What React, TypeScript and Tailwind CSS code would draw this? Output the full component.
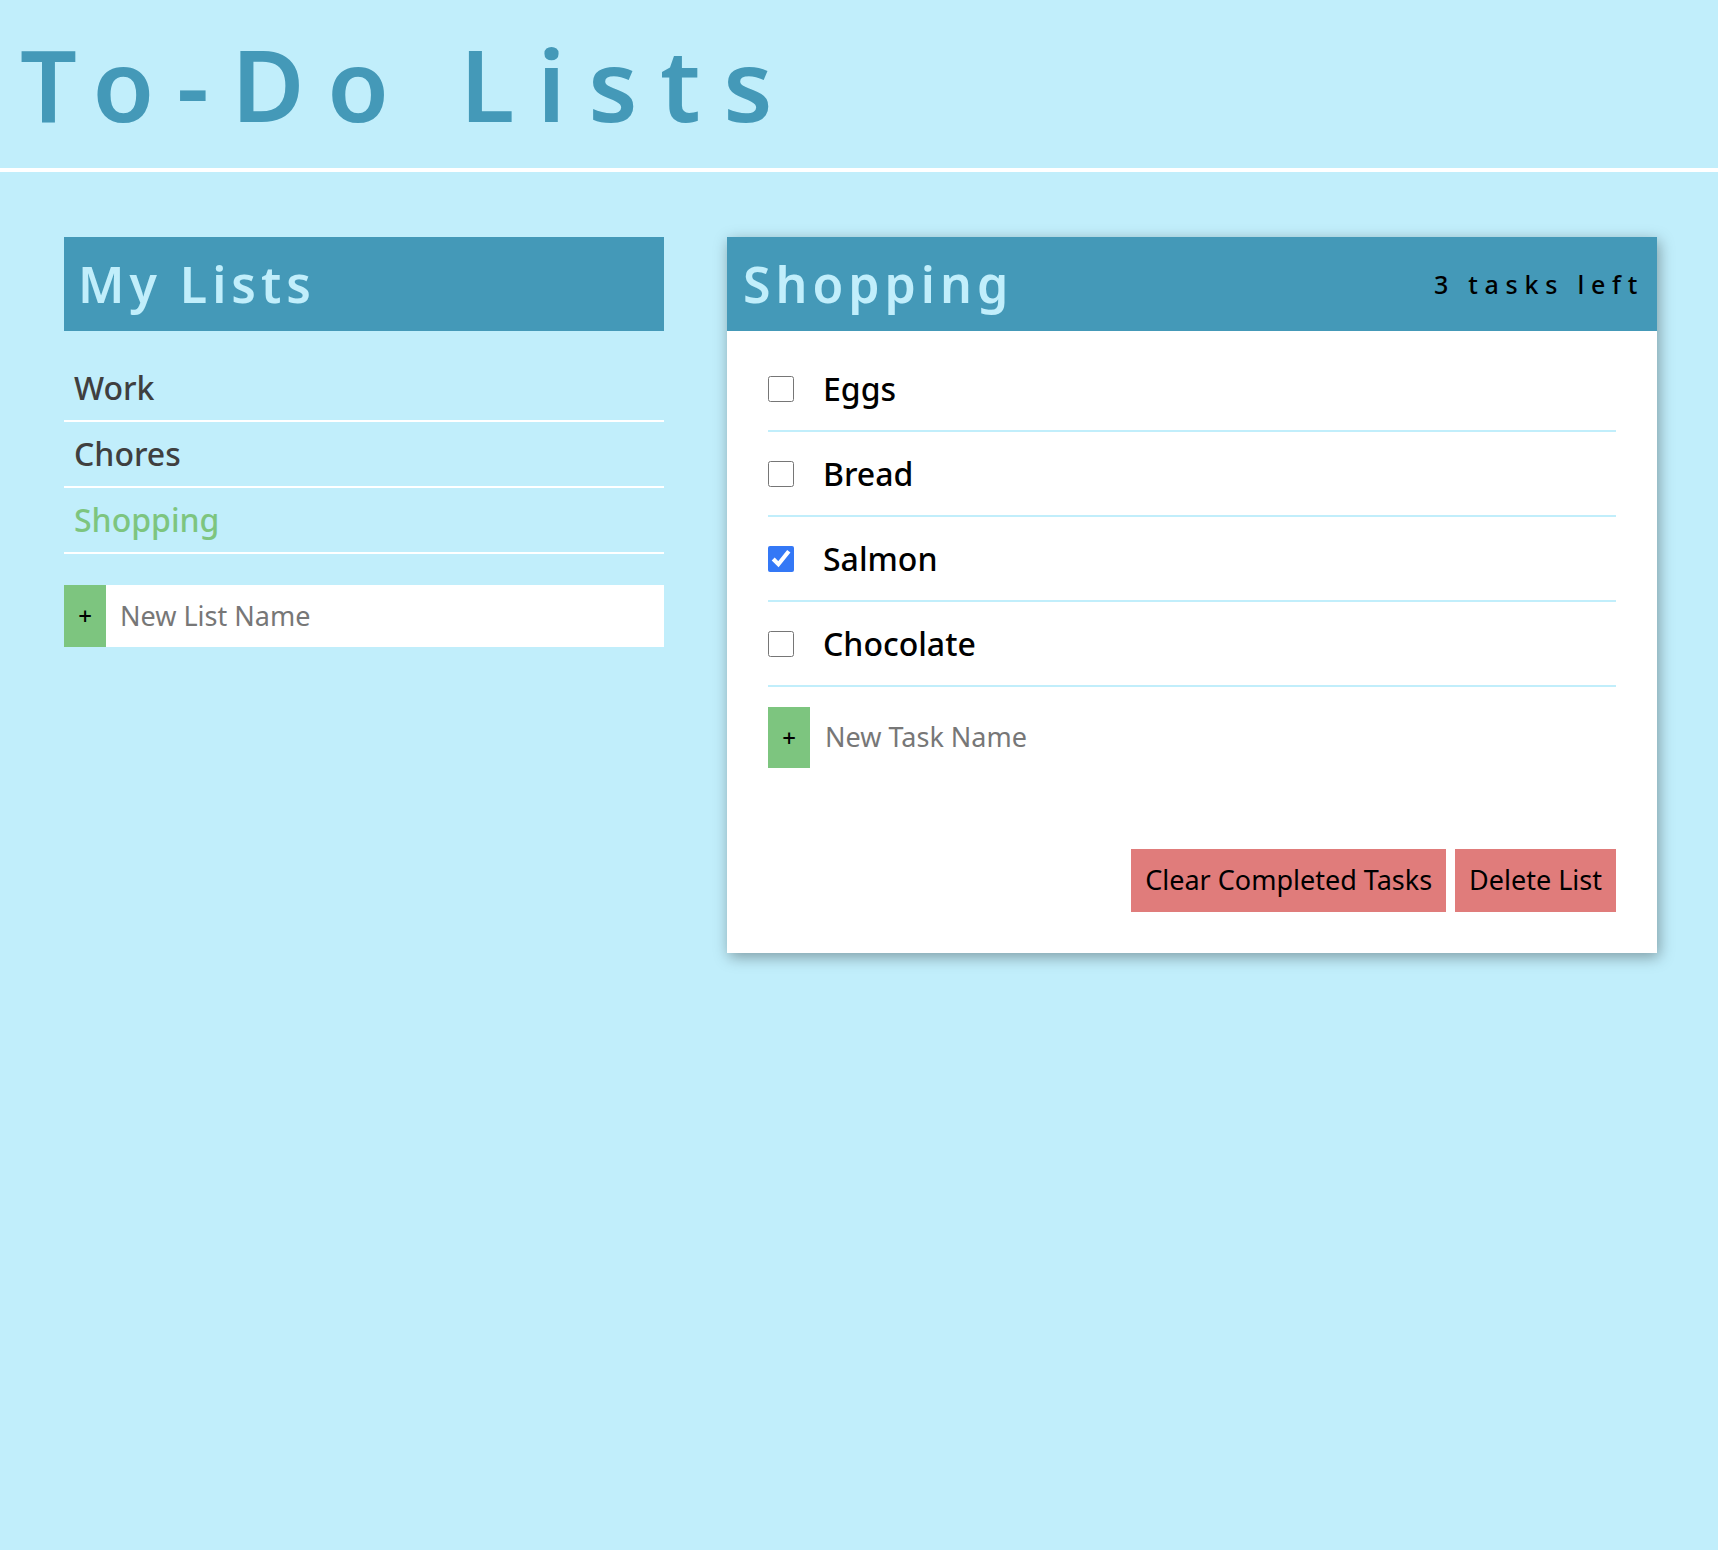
const lists = [
  { name: "Work", active: false },
  { name: "Chores", active: false },
  { name: "Shopping", active: true },
];

const tasks = [
  { name: "Eggs", done: false },
  { name: "Bread", done: false },
  { name: "Salmon", done: true },
  { name: "Chocolate", done: false },
];

export default function App() {
  return (
    <div className="min-h-screen bg-[#c1eefb] font-['Noto_Sans',sans-serif]">
      <h1 className="border-b-4 border-white pb-[35px] pl-[20px] pt-[33px] text-[100px] font-semibold leading-[100px] tracking-[0.226em] text-[#4499b8]">
        To-Do Lists
      </h1>

      <div className="flex items-start gap-[63px] pl-[64px] pt-[65px]">
        {/* left column */}
        <div className="w-[600px]">
          <h2 className="flex h-[94px] items-center bg-[#4499b8] pl-[14px] text-[50px] font-semibold leading-none tracking-[0.1em] text-[#c1eefb]">
            My Lists
          </h2>
          <ul className="mt-[25px]">
            {lists.map((l) => (
              <li
                key={l.name}
                className={
                  l.active
                    ? "flex h-[66px] items-center border-b-2 border-white pl-[10px] text-[32px] font-medium leading-none text-[#7dc57f]"
                    : "flex h-[66px] items-center border-b-2 border-white pl-[10px] text-[32px] font-medium leading-none text-[#3f3f3f]"
                }
              >
                {l.name}
              </li>
            ))}
          </ul>
          <form className="mt-[31px] flex h-[62px]">
            <button
              type="button"
              className="w-[42px] bg-[#7dc57f] text-[24px] font-medium leading-none text-black"
            >
              +
            </button>
            <input
              className="flex-1 bg-white pl-[14px] text-[27px] text-black outline-none placeholder:text-[#777777]"
              placeholder="New List Name"
            />
          </form>
        </div>

        {/* active list card */}
        <div className="w-[930px] bg-white shadow-[2px_4px_14px_rgba(0,0,0,0.35)]">
          <div className="flex h-[94px] items-center justify-between bg-[#4499b8] pl-[16px] pr-[13px]">
            <h2 className="text-[50px] font-semibold leading-none tracking-[0.1em] text-[#c1eefb]">
              Shopping
            </h2>
            <p className="text-[25px] font-medium leading-none tracking-[0.27em] text-black">
              3 tasks left
            </p>
          </div>

          <div className="px-[41px] pb-[41px] pt-[16px]">
            {tasks.map((t) => (
              <label
                key={t.name}
                className="flex h-[85px] items-center gap-[29px] border-b-2 border-[#c1eefb]"
              >
                <input
                  type="checkbox"
                  defaultChecked={t.done}
                  className="m-0 h-[26px] w-[26px] accent-[#3478f6]"
                />
                <span className="text-[32px] font-medium leading-none text-black">
                  {t.name}
                </span>
              </label>
            ))}

            <form className="mt-[20px] flex h-[61px]">
              <button
                type="button"
                className="w-[42px] bg-[#7dc57f] text-[24px] font-medium leading-none text-black"
              >
                +
              </button>
              <input
                className="flex-1 bg-white pl-[15px] text-[27px] text-black outline-none placeholder:text-[#777777]"
                placeholder="New Task Name"
              />
            </form>

            <div className="mt-[81px] flex justify-end gap-[9px]">
              <button className="h-[63px] bg-[#e07c7b] px-[14px] text-[27px] text-black">
                Clear Completed Tasks
              </button>
              <button className="h-[63px] bg-[#e07c7b] px-[14px] text-[27px] text-black">
                Delete List
              </button>
            </div>
          </div>
        </div>
      </div>
    </div>
  );
}
